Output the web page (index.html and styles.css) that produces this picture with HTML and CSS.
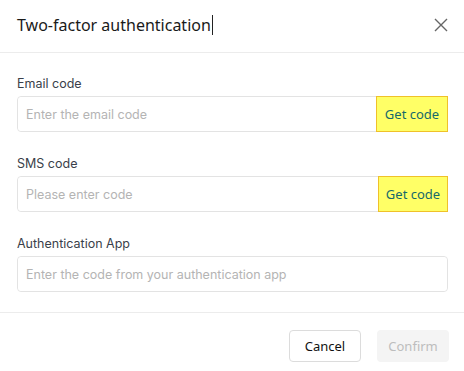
FILE: index.html
```html
<!DOCTYPE html>
<html lang="en">
<head>
    <meta charset="UTF-8">
    <meta name="viewport" content="width=device-width, initial-scale=1.0">
    <title>Two-factor authentication</title>

    <link rel="stylesheet" href="styles.css">

</head>
<body>

    <div class="dialog">
        <!-- Header -->
        <div class="dialog-header">
            <h1>Two-factor authentication<span class="caret"></span></h1>
            <button class="close-btn" aria-label="Close">
                <svg width="14" height="14" viewBox="0 0 14 14">
                    <path d="M1 1 L13 13 M13 1 L1 13" stroke="#666" stroke-width="1.4" fill="none"/>
                </svg>
            </button>
        </div>

        <!-- Fields -->
        <div class="dialog-body">
            <div class="form-group">
                <label for="emailCode">Email code</label>
                <div class="input-wrap">
                    <input type="text" id="emailCode" class="form-control" placeholder="Enter the email code">
                    <button class="get-code">Get code</button>
                </div>
            </div>
            <div class="form-group">
                <label for="smsCode">SMS code</label>
                <div class="input-wrap">
                    <input type="text" id="smsCode" class="form-control" placeholder="Please enter code">
                    <button class="get-code sms">Get code</button>
                </div>
            </div>
            <div class="form-group">
                <label for="appCode">Authentication App</label>
                <div class="input-wrap">
                    <input type="text" id="appCode" class="form-control" placeholder="Enter the code from your authentication app">
                </div>
            </div>
        </div>

        <!-- Footer -->
        <div class="dialog-footer">
            <button class="btn btn-cancel">Cancel</button>
            <button class="btn btn-confirm" disabled>Confirm</button>
        </div>
    </div>

</body>
</html>
```

FILE: styles.css
```css
* {
    margin: 0;
    padding: 0;
    box-sizing: border-box;
}

body {
    background: white;
    font-family: "Noto Sans", sans-serif;
}

.dialog {
    width: 464px;
}

.dialog-header {
    height: 53px;
    display: flex;
    align-items: center;
    justify-content: space-between;
    padding: 0 15px 2px 17px;
    border-bottom: 1px solid #ececec;
}

.dialog-header h1 {
    font-size: 16px;
    font-weight: normal;
    color: #1a1a1a;
    display: flex;
    align-items: center;
}

.caret {
    display: inline-block;
    width: 1px;
    height: 20px;
    background: #222;
    margin-left: 1px;
}

.close-btn {
    border: none;
    background: none;
    width: 16px;
    height: 16px;
    display: flex;
    align-items: center;
    justify-content: center;
    cursor: pointer;
}

.dialog-body {
    padding: 22px 16px 20px 17px;
    border-bottom: 1px solid #ececec;
}

.form-group {
    margin-bottom: 23px;
}

.form-group:last-child {
    margin-bottom: 0;
}

.form-group label {
    display: block;
    font-family: Inter, sans-serif;
    font-size: 12.5px;
    line-height: 18px;
    color: #3a3f4a;
    margin-bottom: 3px;
}

.input-wrap {
    display: flex;
    height: 36px;
    border: 1px solid #e3e3e3;
    border-radius: 4px;
}

.form-control {
    flex: 1;
    min-width: 0;
    border: none;
    border-radius: 4px;
    outline: none;
    padding: 0 8px;
    font-family: Inter, sans-serif;
    font-size: 12.5px;
    color: #333;
}

.form-control::placeholder {
    color: #b4b4b4;
}

.get-code {
    width: 72px;
    margin: -1px -1px -1px 0;
    border: 1.5px solid #efc12a;
    background: #ffff66;
    color: #166a6a;
    font-family: "Noto Sans", sans-serif;
    font-size: 13px;
    cursor: pointer;
}

.get-code.sms {
    width: 70px;
}

.dialog-footer {
    display: flex;
    justify-content: flex-end;
    gap: 16px;
    padding: 17px 15px 0 0;
}

.btn {
    width: 72px;
    height: 32px;
    border-radius: 4px;
    font-family: "Noto Sans", sans-serif;
    font-size: 13px;
    cursor: pointer;
}

.btn-cancel {
    background: white;
    border: 1px solid #dcdcdc;
    color: #111;
}

.btn-confirm {
    background: #f4f4f4;
    border: none;
    color: #bdbdbd;
    cursor: default;
}
```
